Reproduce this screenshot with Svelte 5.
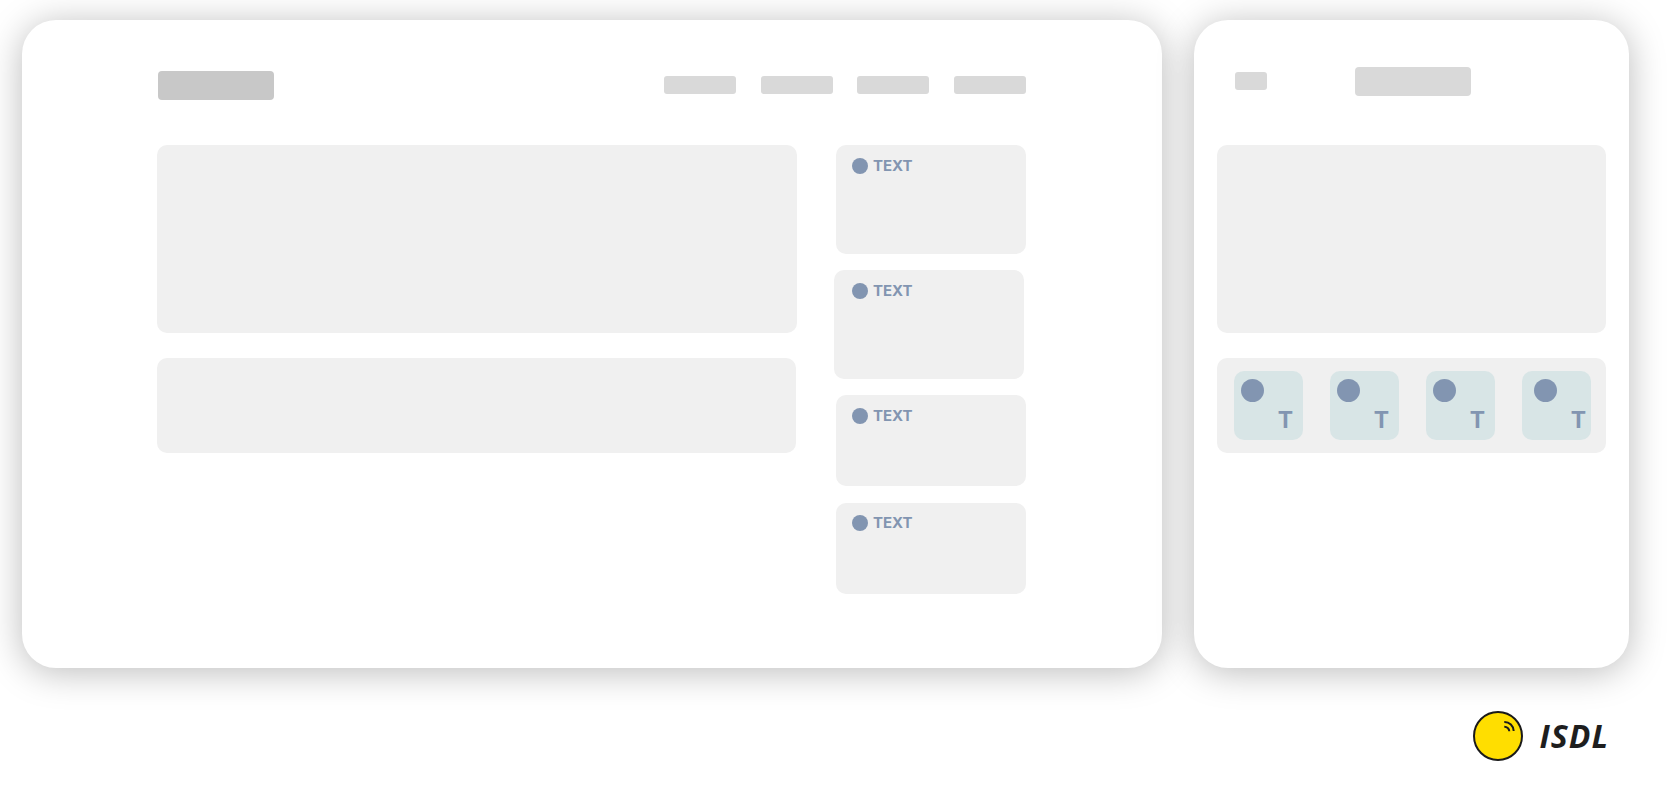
<script>
	const navItems = [0, 1, 2, 3];
	const sideCards = [
		{ tall: true, shifted: false },
		{ tall: true, shifted: true },
		{ tall: false, shifted: false },
		{ tall: false, shifted: false }
	];
	const tiles = [false, false, false, true];
</script>

<div class="page">
	<div class="screens">
		<section class="screen desktop">
			<header class="top">
				<div class="logo-block"></div>
				<nav class="nav">
					{#each navItems as item (item)}
						<div class="nav-item"></div>
					{/each}
				</nav>
			</header>

			<div class="content">
				<div class="main-col">
					<div class="panel hero"></div>
					<div class="panel strip"></div>
				</div>
				<div class="side-col">
					{#each sideCards as card}
						<div class="side-card" class:tall={card.tall} class:shifted={card.shifted}>
							<span class="dot"></span>
							<span class="label">TEXT</span>
						</div>
					{/each}
				</div>
			</div>
		</section>

		<section class="screen mobile">
			<header class="mobile-top">
				<div class="menu-block"></div>
				<div class="title-block"></div>
			</header>
			<div class="panel hero"></div>
			<div class="panel strip tiles">
				{#each tiles as wide}
					<div class="tile" class:wide>
						<span class="tile-dot"></span>
						<span class="tile-label">T</span>
					</div>
				{/each}
			</div>
		</section>
	</div>

	<footer class="brand">
		<svg class="brand-mark" width="50" height="50" viewBox="0 0 50 50" aria-hidden="true">
			<circle cx="25" cy="25" r="24" fill="#ffde00" stroke="#1a1a1a" stroke-width="2" />
			<path d="M31.3 15.7a4.8 4.8 0 0 1 5 4.6" fill="none" stroke="#1a1a1a" stroke-width="2" />
			<path d="M31.3 11a9.2 9.2 0 0 1 9.4 9" fill="none" stroke="#1a1a1a" stroke-width="2" />
		</svg>
		<span class="brand-name">ISDL</span>
	</footer>
</div>

<style>
	:global(body) {
		margin: 0;
		background: #fff;
	}

	.page {
		width: 1672px;
		height: 802px;
		overflow: hidden;
		font-family: 'Inter', sans-serif;
	}

	.screens {
		display: flex;
		gap: 32px;
		padding: 20px 43px 0 22px;
	}

	.screen {
		height: 648px;
		box-sizing: border-box;
		background: #fff;
		border-radius: 34px;
		box-shadow: 0 4px 36px rgba(0, 0, 0, 0.27);
	}

	.desktop {
		width: 1140px;
		padding: 51px 0 0 135px;
	}

	.mobile {
		width: 435px;
		padding: 47px 23px 0 23px;
	}

	.top {
		display: flex;
		justify-content: space-between;
		align-items: flex-start;
		width: 869px;
		height: 29px;
		margin-bottom: 45px;
		padding-left: 1px;
		box-sizing: border-box;
	}

	.logo-block {
		width: 116px;
		height: 29px;
		background: #c8c8c8;
		border-radius: 4px;
	}

	.nav {
		display: flex;
		gap: 25px;
		margin-top: 5px;
	}

	.nav-item {
		width: 72px;
		height: 18px;
		background: #d9d9d9;
		border-radius: 3px;
	}

	.nav-item:nth-child(2) {
		margin-right: -1px;
	}

	.content {
		display: flex;
		gap: 39px;
	}

	.main-col {
		width: 640px;
		display: flex;
		flex-direction: column;
		gap: 25px;
	}

	.panel {
		background: #f0f0f0;
		border-radius: 10px;
	}

	.hero {
		height: 188px;
	}

	.strip {
		height: 95px;
	}

	.main-col .strip {
		margin-right: 1px;
	}

	.side-col {
		width: 190px;
		display: flex;
		flex-direction: column;
		gap: 16px;
	}

	.side-card {
		display: flex;
		align-items: flex-start;
		gap: 5px;
		height: 91px;
		box-sizing: border-box;
		padding: 13px 0 0 16px;
		background: #f0f0f0;
		border-radius: 10px;
	}

	.side-card.tall {
		height: 109px;
	}

	.side-card.shifted {
		margin-left: -2px;
		margin-right: 2px;
		padding-left: 18px;
	}

	.side-card:last-child {
		margin-top: 1px;
		padding-top: 12px;
	}

	.dot {
		width: 16px;
		height: 16px;
		border-radius: 50%;
		background: #8295b1;
	}

	.label {
		font-size: 15px;
		line-height: 16px;
		font-weight: 700;
		color: #8295b1;
	}

	.mobile-top {
		display: flex;
		align-items: flex-start;
		height: 29px;
		margin-bottom: 49px;
		padding-left: 18px;
	}

	.menu-block {
		width: 32px;
		height: 18px;
		margin-top: 5px;
		background: #d9d9d9;
		border-radius: 3px;
	}

	.title-block {
		width: 116px;
		height: 29px;
		margin-left: 88px;
		background: #d9d9d9;
		border-radius: 4px;
	}

	.mobile .hero {
		margin-bottom: 25px;
	}

	.tiles {
		display: flex;
		gap: 27px;
		box-sizing: border-box;
		padding: 13px 15px 13px 17px;
	}

	.tile {
		display: flex;
		flex-direction: column;
		width: 69px;
		height: 69px;
		box-sizing: border-box;
		padding: 8px 10px 0 7px;
		background: #d8e5e6;
		border-radius: 10px;
	}

	.tile.wide {
		padding-left: 12px;
		padding-right: 5px;
	}

	.tile-dot {
		width: 23px;
		height: 23px;
		border-radius: 50%;
		background: #8295b1;
	}

	.tile-label {
		align-self: flex-end;
		font-size: 23px;
		line-height: 36px;
		font-weight: 700;
		color: #8295b1;
	}

	.brand {
		display: flex;
		align-items: center;
		justify-content: flex-end;
		gap: 17px;
		margin-top: 43px;
		padding-right: 63px;
	}

	.brand-mark {
		display: block;
	}

	.brand-name {
		font-family: 'Open Sans', sans-serif;
		font-size: 32px;
		line-height: 50px;
		letter-spacing: 1px;
		font-weight: 700;
		font-style: italic;
		color: #1e1e1e;
	}
</style>
